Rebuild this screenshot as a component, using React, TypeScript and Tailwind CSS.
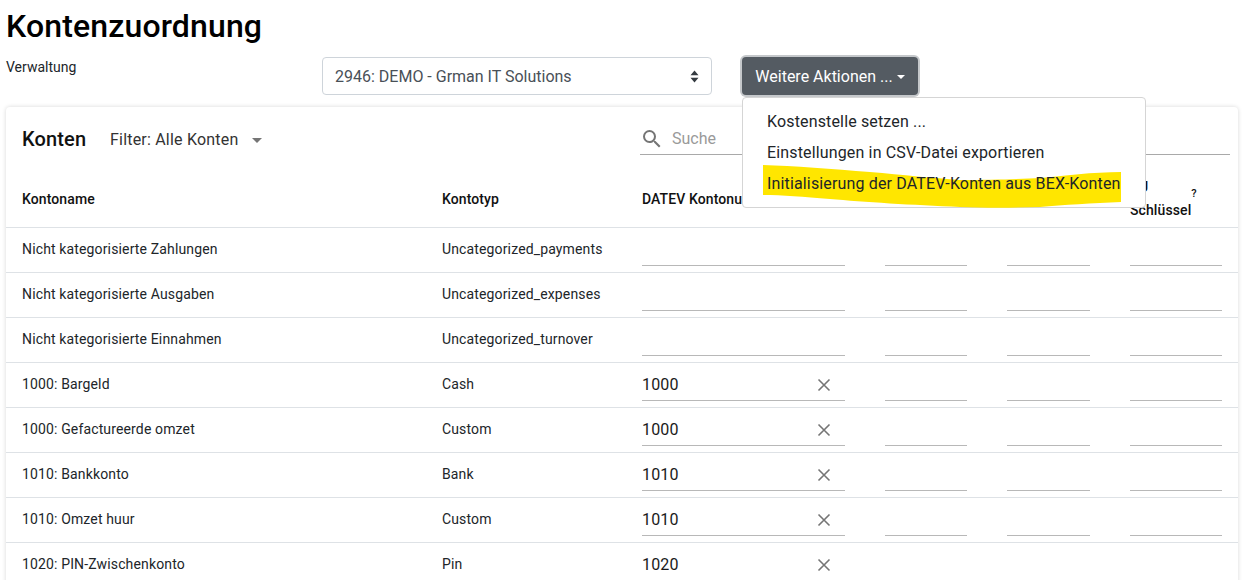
const rows = [
  ["Nicht kategorisierte Zahlungen", "Uncategorized_payments", ""],
  ["Nicht kategorisierte Ausgaben", "Uncategorized_expenses", ""],
  ["Nicht kategorisierte Einnahmen", "Uncategorized_turnover", ""],
  ["1000: Bargeld", "Cash", "1000"],
  ["1000: Gefactureerde omzet", "Custom", "1000"],
  ["1010: Bankkonto", "Bank", "1010"],
  ["1010: Omzet huur", "Custom", "1010"],
  ["1020: PIN-Zwischenkonto", "Pin", "1020"],
];

const grid = "grid grid-cols-[420px_200px_243px_122px_123px_1fr] pl-[16px]";

function Line({ w }: { w: string }) {
  return <div className={`${w} h-[38px] border-b border-[#b8b8b8]`} />;
}

function Row({ name, type, num }: { name: string; type: string; num: string }) {
  return (
    <div className={`${grid} h-[45px] border-b border-[#dee2e6] text-[14px] tracking-[0.14px] text-[#212529] items-start`}>
      <div className="pt-[13px] leading-[17px]">{name}</div>
      <div className="pt-[13px] leading-[17px]">{type}</div>
      <div className="w-[203px] h-[38px] border-b border-[#b8b8b8] flex items-center justify-between pt-[6px] pr-[14px] text-[16px] tracking-[0.15px] text-[#1a1a1a]">
        <span>{num}</span>
        {num && (
          <svg width="14" height="14" viewBox="0 0 14 14" stroke="#757575" strokeWidth="1.6" fill="none">
            <path d="M1.5 1.5L12.5 12.5M12.5 1.5L1.5 12.5" />
          </svg>
        )}
      </div>
      <Line w="w-[82px]" />
      <Line w="w-[83px]" />
      <Line w="w-[92px]" />
    </div>
  );
}

export default function App() {
  return (
    <div className="relative w-[1248px] h-[580px] overflow-hidden bg-white font-['Roboto',sans-serif] pl-[6px] pr-[10px]">
      <h1 className="text-[32px] font-medium tracking-[0.14px] leading-[38px] text-black pt-[7px] h-[46px]">Kontenzuordnung</h1>

      <div className="flex h-[61px] pt-[11px]">
        <div className="w-[316px] text-[14px] leading-[20px] text-[#212529]">Verwaltung</div>
        <div className="w-[390px] h-[38px] border border-[#ced4da] rounded-[4px] flex items-center justify-between pl-[12px] pr-[12px] pt-[1px] text-[16px] text-[#495057]">
          <span>2946: DEMO - Grman IT Solutions</span>
          <svg width="9" height="13" viewBox="0 0 9 13" fill="#343a40">
            <path d="M4.5 0.5L8.5 5.2H0.5ZM4.5 12.5L0.5 7.8H8.5Z" />
          </svg>
        </div>
        <div className="ml-[30px] w-[176px] h-[38px] rounded-[4px] bg-[#545b62] ring-2 ring-[#c5c8cb] flex items-center justify-center gap-[4px] pt-[1px] text-[16px] text-white">
          <span>Weitere Aktionen ...</span>
          <span className="w-0 h-0 border-x-[4.5px] border-x-transparent border-t-[4.5px] border-t-white" />
        </div>
      </div>

      <div className="rounded-[4px] shadow-[0_0_4px_rgba(0,0,0,0.16)] bg-white h-[600px]">
        <div className="flex items-start h-[65px] pl-[16px] pr-[8px] pt-[19px]">
          <div className="text-[20px] font-medium tracking-[0.15px] leading-[26px] text-[#111] w-[88px]">Konten</div>
          <div className="w-[530px] pt-[1px] flex items-center text-[16px] tracking-[0.2px] leading-[26px] text-[#333]">
            <span>Filter: Alle Konten</span>
            <span className="ml-[14px] w-0 h-0 border-x-[5.5px] border-x-transparent border-t-[5.5px] border-t-[#757575]" />
          </div>
          <div className="flex-1 h-[30px] -mt-[1px] pt-[2px] border-b border-[#a9a9a9] flex items-start text-[16px] text-[#9a9a9a]">
            <svg width="24" height="24" viewBox="0 0 24 24" fill="#757575">
              <path d="M15.5 14h-.79l-.28-.27A6.471 6.471 0 0 0 16 9.5 6.5 6.5 0 1 0 9.5 16c1.61 0 3.09-.59 4.23-1.57l.27.28v.79l5 4.99L20.49 19l-4.99-5zm-6 0C7.01 14 5 11.99 5 9.5S7.01 5 9.5 5 14 7.01 14 9.5 11.99 14 9.5 14z" />
            </svg>
            <span className="ml-[8px] mt-[1px] leading-[22px]">Suche</span>
          </div>
        </div>

        <div className={`${grid} h-[56px] border-b border-[#dee2e6] text-[14px] font-medium tracking-[0.1px] text-[#111] leading-[16px]`}>
          <div className="pt-[19px]">Kontoname</div>
          <div className="pt-[19px]">Kontotyp</div>
          <div className="pt-[19px]">DATEV Kontonummer</div>
          <div />
          <div />
          <div className="flex flex-col pt-[7px]">
            <div>BU</div>
            <div className="flex items-start mt-[7px]">
              <span>Schlüssel</span>
              <span className="text-[11px] leading-[10px] -mt-[13px]">?</span>
            </div>
          </div>
        </div>

        {rows.map((r, i) => (
          <Row key={i} name={r[0]} type={r[1]} num={r[2]} />
        ))}
      </div>

      <div className="absolute left-[742px] top-[97px] w-[404px] h-[111px] bg-white border border-[#d5d5d5] rounded-[4px] pt-[8px] text-[16px] tracking-[0.15px] text-[#212529]">
        <svg className="absolute left-[20px] top-[67px]" width="360" height="44" viewBox="0 0 360 44" fill="#ffe600">
          <path d="M0 0 C30 1 70 4 107 7 C140 10 170 13 197 15 C230 15 260 14 277 13 C300 11 330 7 358 7 L358 37 C330 38 300 40 277 42 C250 43 220 43 197 42 C150 40 100 37 67 34 C40 32 20 30 0 30 Z" />
        </svg>
        <div className="relative flex flex-col pl-[24px]">
          <div className="h-[31px] leading-[31px]">Kostenstelle setzen ...</div>
          <div className="h-[31px] leading-[31px]">Einstellungen in CSV-Datei exportieren</div>
          <div className="h-[31px] leading-[31px]">Initialisierung der DATEV-Konten aus BEX-Konten</div>
        </div>
      </div>
    </div>
  );
}
